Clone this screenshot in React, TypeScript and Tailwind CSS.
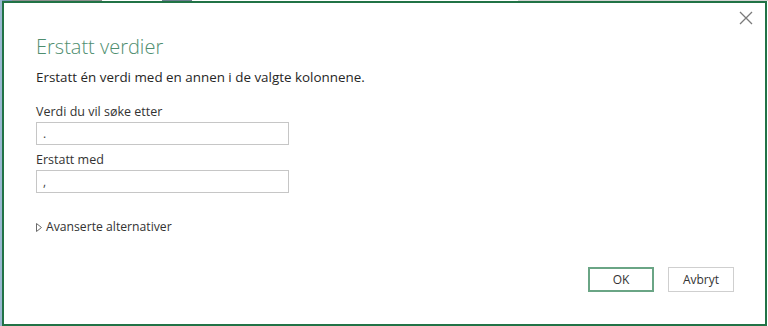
import React from "react";

export default function App() {
  const font = { fontFamily: '"Open Sans", "Noto Sans", "Liberation Sans", sans-serif' };
  return (
    <div className="w-[768px] h-[326px] bg-white relative overflow-hidden" style={font}>
      <div className="absolute left-0 top-0 w-[768px] h-[1px] flex">
        <div className="w-[12px] bg-[#7a9ab8]" />
        <div className="w-[90px] bg-[#8f8f8f]" />
        <div className="w-[60px] bg-white" />
        <div className="w-[30px] bg-[#6d7d8f]" />
        <div className="flex-1 bg-white" />
        <div className="w-[250px] bg-[#d4d4d4]" />
      </div>
      <div className="absolute left-0 top-0 w-[2px] h-[326px] bg-[#9bb7d2]" />
      <div className="absolute left-[2px] top-[1px] w-[765px] h-[325px] border-2 border-[#217346] bg-white flex flex-col">
        <div className="flex justify-end pt-[6px] pr-[12px] h-[30px]">
          <svg width="14" height="14" viewBox="0 0 14 14" className="mt-[2px]">
            <path d="M1 1 L13 13 M13 1 L1 13" stroke="#7a7a7a" strokeWidth="1.3" fill="none" />
          </svg>
        </div>
        <div className="pl-[32px] flex flex-col">
          <div className="text-[20px] leading-[26px] font-light text-[#4f8e6f] mt-[1px]">Erstatt verdier</div>
          <div className="text-[13.4px] leading-[18px] text-[#262626] mt-[8px]">
            Erstatt én verdi med en annen i de valgte kolonnene.
          </div>
          <div className="text-[12.5px] leading-[16px] text-[#333] mt-[18px]">Verdi du vil søke etter</div>
          <div className="w-[253px] h-[23px] border border-[#c6c6c6] mt-[2px] text-[12px] leading-[21px] pl-[6px] text-[#444]">
            .
          </div>
          <div className="text-[12.5px] leading-[16px] text-[#333] mt-[7px]">Erstatt med</div>
          <div className="w-[253px] h-[23px] border border-[#c6c6c6] mt-[2px] text-[12px] leading-[21px] pl-[6px] text-[#444]">
            ,
          </div>
          <div className="flex items-center mt-[26px] text-[12.2px] leading-[16px] text-[#333]">
            <svg width="6" height="9" viewBox="0 0 6 9" className="mr-[4px]">
              <path d="M0.5 0.5 L5.5 4.5 L0.5 8.5 Z" stroke="#6a6a6a" strokeWidth="1" fill="none" />
            </svg>
            Avanserte alternativer
          </div>
        </div>
        <div className="flex justify-end gap-[14px] pr-[31px] mt-[32px]">
          <button className="w-[66px] h-[25px] border-2 border-[#6aa585] text-[12px] text-[#333] bg-white flex items-center justify-center">
            OK
          </button>
          <button className="w-[66px] h-[25px] border border-[#cfcfcf] text-[12px] text-[#333] bg-white flex items-center justify-center">
            Avbryt
          </button>
        </div>
      </div>
    </div>
  );
}
